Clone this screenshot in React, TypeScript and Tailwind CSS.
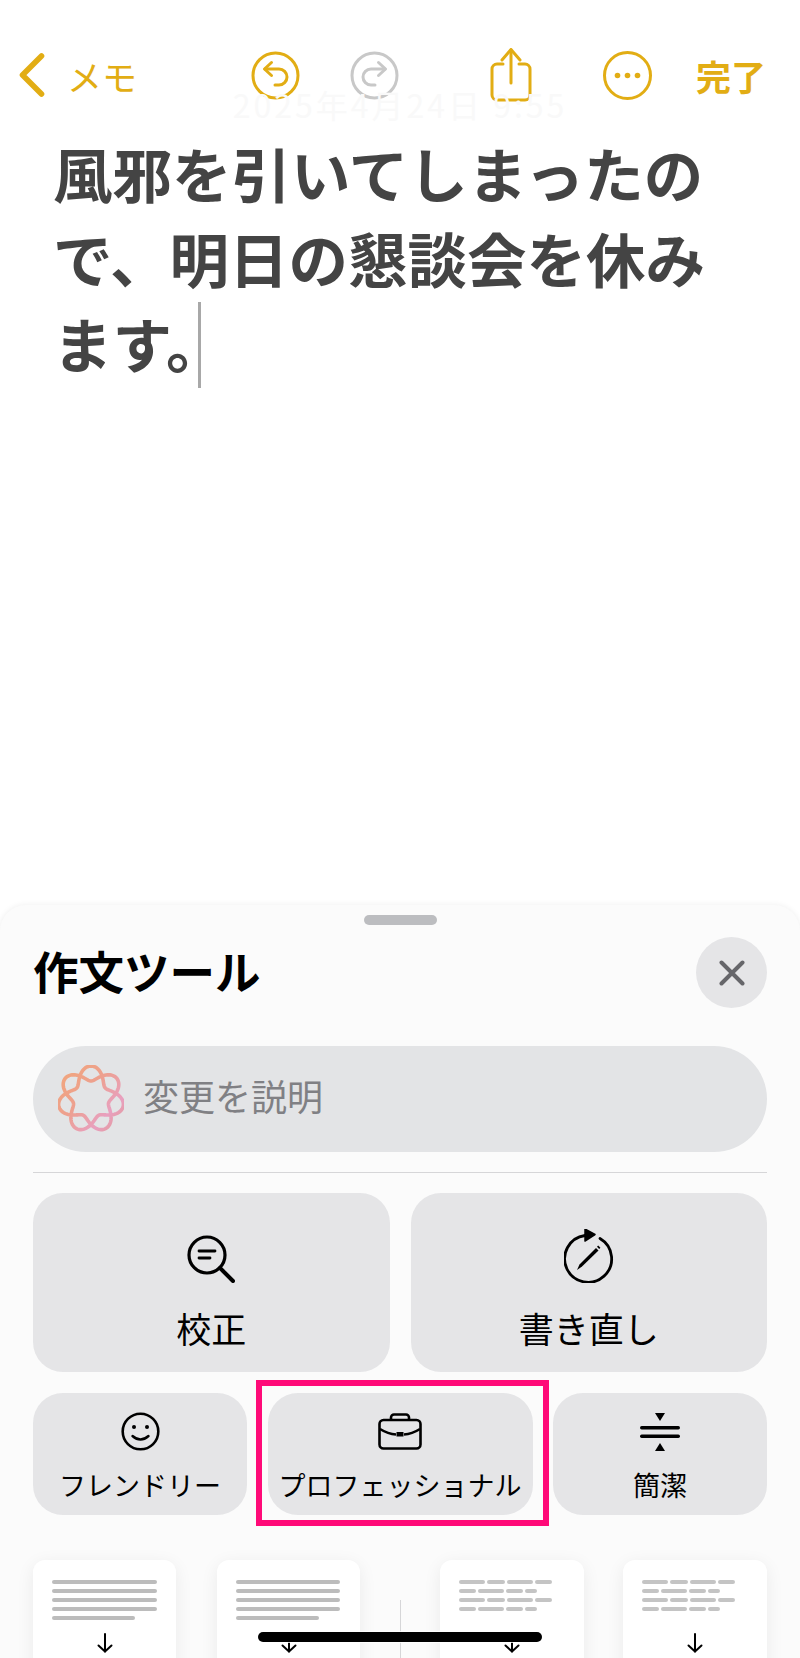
const FONT = "font-['Noto_Sans_CJK_JP','Noto_Sans',sans-serif]";

// ribbon logo: one line wound twice round the centre, 7 lens shapes
const ribbonPath = () => {
 const pts: string[] = [];
 for (let i = 0; i <= 360; i++) {
  const t = (i / 360) * 4 * Math.PI;
  const r = 25.5 + 7.5 * Math.cos(3.5 * t);
  const x = 33 + r * Math.sin(t);
  const y = 34 - r * Math.cos(t);
  pts.push(`${i === 0 ? "M" : "L"}${x.toFixed(2)} ${y.toFixed(2)}`);
 }
 return pts.join(" ") + "Z";
};

const RibbonLogo = () => (
 <svg width="66" height="68" viewBox="0 0 66 68" fill="none">
  <defs>
   <linearGradient id="ribbon" x1="0" y1="0" x2="1" y2="0.9">
    <stop offset="0" stopColor="#f2a77a" />
    <stop offset="0.45" stopColor="#eda08f" />
    <stop offset="0.8" stopColor="#e8a0c0" />
    <stop offset="1" stopColor="#e39a9a" />
   </linearGradient>
  </defs>
  <path d={ribbonPath()} stroke="url(#ribbon)" strokeWidth="3.6" />
 </svg>
);

const UndoIcon = ({ color, flip }: { color: string; flip?: boolean }) => (
 <svg width="49" height="49" viewBox="0 0 49 49" fill="none" stroke={color} strokeWidth="3" strokeLinecap="round" strokeLinejoin="round">
  <circle cx="24.5" cy="24.5" r="22.5" />
  <g transform={flip ? "matrix(-1 0 0 1 49 0)" : undefined}>
   <path d="M20.5 11.5 L13.5 18 L20.5 24.5" />
   <path d="M14 18 H28 a7.5 7.5 0 0 1 0 16 H24" />
  </g>
 </svg>
);

const ShareIcon = () => (
 <svg width="42" height="54" viewBox="0 0 42 54" fill="none" stroke="#e2ad14" strokeWidth="3" strokeLinecap="round" strokeLinejoin="round">
  <path d="M13 16 H7 a5 5 0 0 0 -5 5 V47 a5 5 0 0 0 5 5 H35 a5 5 0 0 0 5 -5 V21 a5 5 0 0 0 -5 -5 H29" />
  <path d="M21 35 V2" />
  <path d="M12 12 L21 1.5 L30 12" />
 </svg>
);

const MoreIcon = () => (
 <svg width="49" height="49" viewBox="0 0 49 49" fill="none">
  <circle cx="24.5" cy="24.5" r="23" stroke="#e2ad14" strokeWidth="3" />
  <circle cx="14.5" cy="24.5" r="2.8" fill="#e2ad14" />
  <circle cx="24.5" cy="24.5" r="2.8" fill="#e2ad14" />
  <circle cx="34.5" cy="24.5" r="2.8" fill="#e2ad14" />
 </svg>
);

const ProofreadIcon = () => (
 <svg width="48" height="48" viewBox="0 0 48 48" fill="none" stroke="#000" strokeLinecap="round">
  <circle cx="20" cy="20" r="18" strokeWidth="3.2" />
  <path d="M33 33 L46 46" strokeWidth="4" />
  <path d="M12 16 H28 M12 23 H23" strokeWidth="2.8" />
 </svg>
);

const RewriteIcon = () => (
 <svg width="50" height="54" viewBox="0 0 50 54" fill="none" stroke="#000" strokeLinecap="round">
  <path d="M36 9.5 A23.5 23.5 0 1 1 21 6.5" strokeWidth="2.8" />
  <path d="M21 0 L31 5.5 L21 12 Z" fill="#000" stroke="#000" strokeWidth="1.5" strokeLinejoin="round" />
  <path d="M13 41 L15.5 35.5 L32 19 L34.5 21.5 L18 37.5 Z" fill="#000" stroke="none" />
  <path d="M33 17.8 L34.2 16.6 L36.4 18.8 L35.2 20 Z" fill="#000" stroke="none" />
 </svg>
);

const SmileIcon = () => (
 <svg width="39" height="39" viewBox="0 0 39 39" fill="none" stroke="#000" strokeLinecap="round">
  <circle cx="19.5" cy="19.5" r="17.8" strokeWidth="2.6" />
  <circle cx="13" cy="15" r="2" fill="#000" stroke="none" />
  <circle cx="26" cy="15" r="2" fill="#000" stroke="none" />
  <path d="M11.5 24 Q19.5 31 27.5 24" strokeWidth="2.4" />
 </svg>
);

const BriefcaseIcon = () => (
 <svg width="44" height="37" viewBox="0 0 44 37" fill="none" stroke="#000" strokeWidth="2.6" strokeLinejoin="round">
  <rect x="1.5" y="7" width="41" height="28.5" rx="4" />
  <path d="M13 7 V4.5 a3 3 0 0 1 3 -3 H28 a3 3 0 0 1 3 3 V7" />
  <path d="M2 16 Q10 21 18 21.5 M26 21.5 Q34 21 42 16" />
  <rect x="18.5" y="19" width="7" height="4.5" fill="#000" stroke="none" />
 </svg>
);

const ConciseIcon = () => (
 <svg width="40" height="38" viewBox="0 0 40 38" fill="#000">
  <path d="M15 0 H25 L20 8 Z" />
  <rect x="0" y="13" width="40" height="3.4" rx="1.7" />
  <rect x="0" y="21.5" width="40" height="3.4" rx="1.7" />
  <path d="M15 38 H25 L20 30 Z" />
 </svg>
);

const DownArrow = () => (
 <svg width="16" height="20" viewBox="0 0 16 20" fill="none" stroke="#000" strokeWidth="2" strokeLinecap="round" strokeLinejoin="round">
  <path d="M8 1 V18.5" />
  <path d="M1.5 12.5 L8 18.5 L14.5 12.5" />
 </svg>
);

const bigActions = [
 { label: "校正", icon: <ProofreadIcon />, top: "pt-[42px]", gap: "mt-[27px]" },
 { label: "書き直し", icon: <RewriteIcon />, top: "pt-[36px]", gap: "mt-[27px]" },
];

const smallActions = [
 { label: "フレンドリー", icon: <SmileIcon /> },
 { label: "プロフェッショナル", icon: <BriefcaseIcon /> },
 { label: "簡潔", icon: <ConciseIcon /> },
];

const listRows = [
 ["w-[26px]", "w-[18px]", "w-[26px]", "w-[17px]"],
 ["w-[17px]", "w-[26px]", "w-[17px]", "w-[12px]"],
 ["w-[26px]", "w-[18px]", "w-[26px]", "w-[17px]"],
 ["w-[17px]", "w-[26px]", "w-[17px]", "w-[12px]"],
];

const FormatCard = ({ lines, className }: { lines?: string[]; className: string }) => (
 <div className={`h-[140px] shrink-0 rounded-[12px] bg-white pt-[20px] shadow-[0_4px_18px_rgba(0,0,0,0.07)] ${className}`}>
  <div className="flex h-[44px] flex-col gap-[5px] pl-[19px]">
   {lines
    ? lines.map((w, i) => <div key={i} className={`h-[4px] rounded-full bg-[#bcbcbc] ${w}`} />)
    : listRows.map((row, i) => (
       <div key={i} className="flex gap-[2px]">
        {row.map((w, j) => (
         <div key={j} className={`h-[4px] rounded-full bg-[#c4c4c4] ${w}`} />
        ))}
       </div>
      ))}
  </div>
  <div className="mt-[9px] flex justify-center">
   <DownArrow />
  </div>
 </div>
);

export default function App() {
 return (
  <div className={`relative flex h-[1658px] w-[800px] flex-col overflow-hidden bg-white ${FONT}`}>
   <header className="mt-[48px] flex h-[54px] items-center pl-[19px] text-[#e2ad14]">
    <svg width="26" height="44" viewBox="0 0 26 44" fill="none" stroke="#e2ad14" strokeWidth="5.6" strokeLinecap="round" strokeLinejoin="round">
     <path d="M22.5 3 L3.5 22 L22.5 41" />
    </svg>
    <span className="ml-[22px] text-[35px] leading-none">メモ</span>
    <div className="ml-[114px]">
     <UndoIcon color="#e2ad14" />
    </div>
    <div className="ml-[50px]">
     <UndoIcon color="#c8c8c8" flip />
    </div>
    <div className="ml-[91px]">
     <ShareIcon />
    </div>
    <div className="ml-[71px]">
     <MoreIcon />
    </div>
    <span className="ml-[44px] text-[35px] font-bold leading-none">完了</span>
   </header>

   <p className="-mt-[14px] text-center text-[32px] leading-[32px] tracking-[3px] text-[#f9f9f9]">2025年4月24日 9:55</p>

   <h1 className="ml-[53px] mt-[10px] text-[59.5px] font-bold leading-[85px] text-[#444444]">
    風邪を引いてしまったの
    <br />
    で、明日の懇談会を休み
    <br />
    ます。
    <span className="ml-[-28px] inline-block h-[86px] w-[3px] bg-[#a8a8a8] align-[-20px]" />
   </h1>

   <section className="mt-auto h-[753px] shrink-0 rounded-t-[26px] bg-[#fbfbfb] px-[33px] shadow-[0_0_6px_rgba(0,0,0,0.07)]">
    <div className="mx-auto h-[10px] w-[73px] translate-y-[10px] rounded-full bg-[#bcbdc0]" />

    <div className="mt-[22px] flex h-[71px] items-center justify-between">
     <h2 className="-mt-[4px] text-[45.5px] font-bold leading-none text-black">作文ツール</h2>
     <button className="flex h-[71px] w-[71px] items-center justify-center rounded-full bg-[#e5e5e7]">
      <svg width="26" height="26" viewBox="0 0 26 26" fill="none" stroke="#66666a" strokeWidth="4" strokeLinecap="round">
       <path d="M2.5 2.5 L23.5 23.5 M23.5 2.5 L2.5 23.5" />
      </svg>
     </button>
    </div>

    <div className="mt-[38px] flex h-[106px] items-center gap-[19px] rounded-full bg-[#e3e4e6] pl-[25px]">
     <RibbonLogo />
     <span className="-mt-[8px] text-[36px] leading-none text-[#808084]">変更を説明</span>
    </div>

    <div className="mt-[20px] h-px bg-[#d6d6d8]" />

    <div className="mt-[20px] flex gap-[21px]">
     {bigActions.map((a) => (
      <button key={a.label} className={`flex h-[179px] flex-1 flex-col items-center rounded-[30px] bg-[#e5e5e7] text-black ${a.top}`}>
       {a.icon}
       <span className={`text-[35px] leading-[35px] ${a.gap}`}>{a.label}</span>
      </button>
     ))}
    </div>

    <div className="mt-[21px] grid grid-cols-[214px_265px_214px] gap-x-[20.5px]">
     {smallActions.map((a) => (
      <button key={a.label} className="flex h-[122px] flex-col items-center rounded-[30px] bg-[#e5e5e7] pt-[19px] text-black">
       <div className="flex h-[39px] items-center">{a.icon}</div>
       <span className="mt-[20px] whitespace-nowrap text-[27px] leading-[28px]">{a.label}</span>
      </button>
     ))}
    </div>

    <div className="mt-[45px] flex">
     <FormatCard lines={["w-[105px]", "w-[105px]", "w-[105px]", "w-[105px]", "w-[83px]"]} className="w-[143px]" />
     <FormatCard lines={["w-[104px]", "w-[104px]", "w-[104px]", "w-[104px]", "w-[83px]"]} className="ml-[41px] w-[143px]" />
     <div className="ml-[40px] mt-[40px] h-[120px] w-px shrink-0 bg-[#d6d6d8]" />
     <FormatCard className="ml-[39px] w-[144px]" />
     <FormatCard className="ml-[39px] w-[144px]" />
    </div>
   </section>

   {/* annotation frame drawn over the screenshot */}
   <div className="absolute left-[256px] top-[1380px] h-[146px] w-[293px] border-[6px] border-[#ff0a78]" />
   {/* home indicator */}
   <div className="absolute left-[258px] top-[1632px] h-[10px] w-[284px] rounded-full bg-black shadow-[0_0_0_1px_rgba(255,255,255,0.8)]" />
  </div>
 );
}
